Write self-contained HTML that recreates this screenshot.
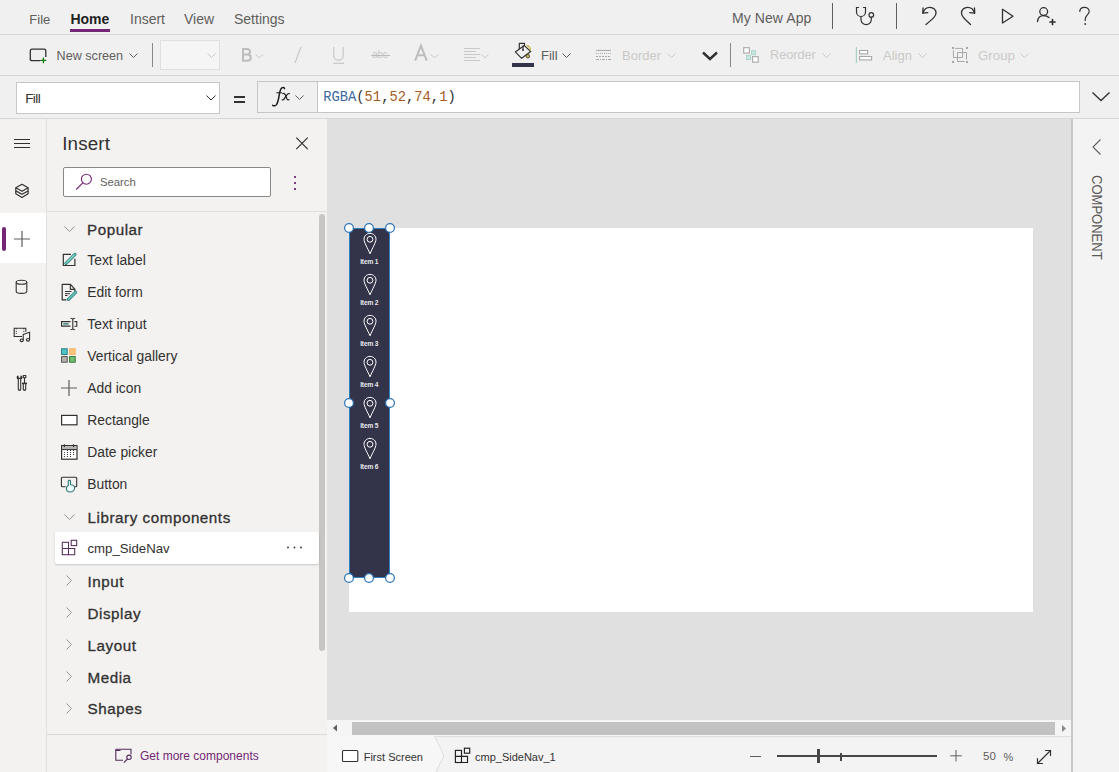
<!DOCTYPE html>
<html><head><meta charset="utf-8">
<style>
*{box-sizing:border-box;margin:0;padding:0}
html,body{width:1119px;height:772px;overflow:hidden;background:#f0f0f0;font-family:"Liberation Sans",sans-serif;color:#323130;position:relative}
.a{position:absolute}
.t{position:absolute;white-space:nowrap;line-height:1}
svg{position:absolute;overflow:visible}
</style></head><body>
<div class="a" style="left:0px;top:0px;width:1119px;height:118px;background:#f0f0f0;"></div>
<div class="a" style="left:0px;top:34px;width:1119px;height:1px;background:#d6d6d6;"></div>
<div class="a" style="left:0px;top:75px;width:1119px;height:1px;background:#d6d6d6;"></div>
<div class="a" style="left:0px;top:118px;width:1119px;height:1px;background:#d6d6d6;"></div>
<div class="a" style="left:0px;top:119px;width:46px;height:653px;background:#f3f2f1;"></div>
<div class="a" style="left:46px;top:119px;width:1px;height:653px;background:#e1dfdd;"></div>
<div class="a" style="left:0px;top:213px;width:46px;height:50px;background:#ffffff;"></div>
<div class="a" style="left:2px;top:227px;width:4px;height:24px;background:#742774;border-radius:2px;"></div>
<div class="a" style="left:47px;top:119px;width:280px;height:653px;background:#f3f2f1;"></div>
<div class="a" style="left:47px;top:211px;width:280px;height:1px;background:#e1dfdd;"></div>
<div class="a" style="left:47px;top:734px;width:280px;height:1px;background:#dcdad8;"></div>
<div class="a" style="left:327px;top:119px;width:744px;height:601px;background:#e0e0e0;"></div>
<div class="a" style="left:349px;top:228px;width:684px;height:384px;background:#ffffff;"></div>
<div class="a" style="left:327px;top:720px;width:744px;height:16px;background:#f5f5f5;"></div>
<div class="a" style="left:352px;top:722px;width:703px;height:13px;background:#c2c2c2;"></div>
<svg style="left:327px;top:720px;" width="744" height="16" viewBox="0 0 744 16" fill="none"><path d="M10 4.5 L6 8 L10 11.5Z" fill="#605e5c"/><path d="M735 5 L739 8.5 L735 12Z" fill="#8a8886"/></svg>
<div class="a" style="left:327px;top:736px;width:744px;height:36px;background:#f3f3f3;"></div>
<div class="a" style="left:327px;top:736px;width:744px;height:1px;background:#dedede;"></div>
<div class="a" style="left:1071px;top:119px;width:2px;height:653px;background:#c8c8c8;"></div>
<div class="a" style="left:1073px;top:119px;width:46px;height:653px;background:#f3f3f3;"></div>
<div class="t" style="left:29.30px;top:12.50px;font-size:13px;color:#605e5c;">File</div>
<div class="t" style="left:70.40px;top:11.65px;font-size:14px;color:#201f1e;font-weight:700;">Home</div>
<div class="a" style="left:70px;top:29px;width:40px;height:3px;background:#742774;"></div>
<div class="t" style="left:130.00px;top:11.65px;font-size:14px;color:#605e5c;">Insert</div>
<div class="t" style="left:184.00px;top:11.65px;font-size:14px;color:#605e5c;">View</div>
<div class="t" style="left:234.00px;top:11.65px;font-size:14px;color:#605e5c;">Settings</div>
<div class="t" style="left:732.00px;top:10.85px;font-size:14px;color:#605e5c;letter-spacing:0.08px;">My New App</div>
<div class="a" style="left:832px;top:3px;width:1px;height:26px;background:#605e5c;"></div>
<div class="a" style="left:896px;top:3px;width:1px;height:26px;background:#605e5c;"></div>
<svg style="left:850px;top:0px;" width="50" height="34" viewBox="0 0 50 34" fill="none"><g stroke="#323130" stroke-width="1.2" fill="none" stroke-linecap="round"><path d="M8.5 7.5 H6.5 V12 A4.5 4.5 0 0 0 15.5 12 V7.5 H13.5"/><path d="M11 16.5 V19.5 A5 5 0 0 0 21.3 19.5 V17.3"/><circle cx="21.3" cy="14.9" r="2.3"/></g></svg>
<svg style="left:915px;top:0px;" width="30" height="34" viewBox="0 0 30 34" fill="none"><g stroke="#323130" stroke-width="1.3" fill="none" stroke-linecap="round" stroke-linejoin="round"><path d="M8 13 C9 9 12 7.3 15 7.3 C18.5 7.3 21 10 21 13 C21 16 19 18 11 24.5"/><path d="M8 8 L7.8 13.2 L12.8 12.6"/></g></svg>
<svg style="left:955px;top:0px;" width="30" height="34" viewBox="0 0 30 34" fill="none"><g stroke="#323130" stroke-width="1.3" fill="none" stroke-linecap="round" stroke-linejoin="round"><path d="M19.5 13 C18.5 9 15.5 7.3 12.5 7.3 C9 7.3 6.5 10 6.5 13 C6.5 16 8.5 18 15.5 24.5"/><path d="M19.5 8 L19.7 13.2 L14.7 12.6"/></g></svg>
<svg style="left:995px;top:0px;" width="30" height="34" viewBox="0 0 30 34" fill="none"><path d="M7.5 9.3 L7.5 23 L18 16.2 Z" stroke="#323130" stroke-width="1.3" fill="none" stroke-linejoin="round"/></svg>
<svg style="left:1030px;top:0px;" width="35" height="34" viewBox="0 0 35 34" fill="none"><g stroke="#323130" stroke-width="1.3" fill="none" stroke-linecap="round"><circle cx="13.7" cy="11.6" r="3.9"/><path d="M7.5 21.6 C8 17.5 10.5 15.7 13.7 15.7 C16 15.7 17.7 16.5 19 17.6"/><path d="M22.5 19.5 V24.5 M20 22 H25" stroke-width="1.7"/></g></svg>
<svg style="left:1070px;top:0px;" width="30" height="34" viewBox="0 0 30 34" fill="none"><g stroke="#323130" stroke-width="1.2" fill="none" stroke-linecap="round"><path d="M9.8 11.5 C9.8 8.8 12 7.3 14.5 7.3 C17 7.3 19.2 9 19.2 11.6 C19.2 14.5 15.2 15.6 15.2 19.3 V20.5"/></g><circle cx="15.2" cy="24" r="0.9" fill="#323130"/></svg>
<svg style="left:25px;top:40px;" width="30" height="30" viewBox="0 0 30 30" fill="none"><path d="M15.5 20.7 H7 Q5.3 20.7 5.3 19 V10.8 Q5.3 9.1 7 9.1 H19.1 Q20.8 9.1 20.8 10.8 V17" stroke="#323130" stroke-width="1.3" fill="none"/><path d="M18.4 17.5 V23.3 M15.5 20.4 H21.3" stroke="#107c10" stroke-width="1.3"/></svg>
<div class="t" style="left:56.60px;top:49.83px;font-size:12.6px;color:#605e5c;">New screen</div>
<svg style="left:129px;top:53px;" width="9" height="5" viewBox="0 0 9 5" fill="none"><path d="M0.5 0.5 L4.5 4.5 L8.5 0.5" stroke="#605e5c" stroke-width="1" fill="none"/></svg>
<div class="a" style="left:152px;top:43px;width:1px;height:24px;background:#8a8886;"></div>
<div class="a" style="left:160px;top:40px;width:60px;height:30px;background:#f5f5f5;border:1px solid #e1dfdd;"></div>
<svg style="left:206.5px;top:52.5px;" width="9" height="5" viewBox="0 0 9 5" fill="none"><path d="M0.5 0.5 L4.5 4.5 L8.5 0.5" stroke="#cbc9c7" stroke-width="1" fill="none"/></svg>
<svg style="left:236px;top:42px;" width="34" height="26" viewBox="0 0 34 26" fill="none"><path d="M7 6.9 H10.6 C12.9 6.9 14.1 8 14.1 9.8 C14.1 11.5 12.8 12.6 10.8 12.6 H7 M7 12.6 H11.2 C13.4 12.6 14.8 13.8 14.8 15.7 C14.8 17.7 13.3 18.8 11.1 18.8 H7 V5.9" stroke="#bdbdbd" stroke-width="2" fill="none"/></svg>
<svg style="left:255.4px;top:53.8px;" width="8.6" height="4.2" viewBox="0 0 8.6 4.2" fill="none"><path d="M0.5 0.5 L4.3 3.7 L8.1 0.5" stroke="#cbc9c7" stroke-width="1" fill="none"/></svg>
<svg style="left:290px;top:44px;" width="15" height="22" viewBox="0 0 15 22" fill="none"><path d="M11 3 L5 19" stroke="#cbc9c7" stroke-width="1.3"/></svg>
<svg style="left:330px;top:44px;" width="18" height="22" viewBox="0 0 18 22" fill="none"><path d="M3.8 3 V11.5 A4.7 4.7 0 0 0 13.2 11.5 V3" stroke="#cbc9c7" stroke-width="1.2" fill="none"/><path d="M3 19.3 H14" stroke="#cbc9c7" stroke-width="1.2"/></svg>
<div class="t" style="left:372.30px;top:49.83px;font-size:10px;color:#cbc9c7;letter-spacing:-0.3px;">abc</div>
<div class="a" style="left:370.5px;top:55px;width:19px;height:1px;background:#bdbdbd;"></div>
<svg style="left:408px;top:42px;" width="34" height="26" viewBox="0 0 34 26" fill="none"><path d="M7.2 18.7 L12.95 3.6 L18.7 18.7 M9.3 13.3 H16.6" stroke="#bdbdbd" stroke-width="2" fill="none"/></svg>
<svg style="left:429.5px;top:53.8px;" width="9" height="4.2" viewBox="0 0 9 4.2" fill="none"><path d="M0.5 0.5 L4.5 3.7 L8.5 0.5" stroke="#cbc9c7" stroke-width="1" fill="none"/></svg>
<svg style="left:460px;top:45px;" width="22" height="20" viewBox="0 0 22 20" fill="none"><path d="M4 3.5 H20" stroke="#cbc9c7" stroke-width="1"/><path d="M4 6.5 H16" stroke="#cbc9c7" stroke-width="1"/><path d="M4 9.5 H20" stroke="#cbc9c7" stroke-width="1"/><path d="M4 12.5 H16" stroke="#cbc9c7" stroke-width="1"/><path d="M4 15.5 H20" stroke="#cbc9c7" stroke-width="1"/></svg>
<svg style="left:481px;top:54px;" width="8" height="4.5" viewBox="0 0 8 4.5" fill="none"><path d="M0.5 0.5 L4.0 4.0 L7.5 0.5" stroke="#cbc9c7" stroke-width="1" fill="none"/></svg>
<svg style="left:505px;top:38px;" width="40" height="32" viewBox="0 0 40 32" fill="none"><g stroke="#323130" stroke-width="1.2" fill="none" stroke-linejoin="round"><path d="M10.3 13.9 L19.3 7.6 L25.7 13.5 L16.6 20.3 Z"/><path d="M14.3 11.2 V5.3 H19.5 V7.8"/><path d="M18 7.5 V11.5"/></g><circle cx="18" cy="12" r="1" fill="#323130"/><path d="M21.5 7.5 C24 7.5 25.5 10 25.3 12.5" stroke="#c8b94a" stroke-width="1.4" fill="none"/><circle cx="22.8" cy="18.2" r="1.8" fill="#c8b94a" stroke="#323130" stroke-width="0.8"/></svg>
<div class="a" style="left:512px;top:63px;width:22px;height:4px;background:#33344a;"></div>
<div class="t" style="left:541.00px;top:49.00px;font-size:13px;color:#605e5c;">Fill</div>
<svg style="left:562px;top:53px;" width="9" height="5" viewBox="0 0 9 5" fill="none"><path d="M0.5 0.5 L4.5 4.5 L8.5 0.5" stroke="#605e5c" stroke-width="1" fill="none"/></svg>
<svg style="left:590px;top:42px;" width="30" height="26" viewBox="0 0 30 26" fill="none"><path d="M6 8.4 H21" stroke="#a8a8a8" stroke-width="1"/><rect x="5.9" y="10.9" width="1" height="1" fill="#a8a8a8"/><rect x="7.9" y="10.9" width="1" height="1" fill="#a8a8a8"/><rect x="9.9" y="10.9" width="1" height="1" fill="#a8a8a8"/><rect x="11.9" y="10.9" width="1" height="1" fill="#a8a8a8"/><rect x="13.9" y="10.9" width="1" height="1" fill="#a8a8a8"/><rect x="15.9" y="10.9" width="1" height="1" fill="#a8a8a8"/><rect x="17.9" y="10.9" width="1" height="1" fill="#a8a8a8"/><rect x="19.9" y="10.9" width="1" height="1" fill="#a8a8a8"/><rect x="6" y="14" width="2" height="1" fill="#a8a8a8"/><rect x="9" y="14" width="2" height="1" fill="#a8a8a8"/><rect x="12" y="14" width="2" height="1" fill="#a8a8a8"/><rect x="15" y="14" width="2" height="1" fill="#a8a8a8"/><rect x="18" y="14" width="2" height="1" fill="#a8a8a8"/><path d="M6 17.5 H9 M10 17.5 H11 M12 17.5 H15 M16 17.5 H17 M18 17.5 H21" stroke="#a8a8a8" stroke-width="1"/></svg>
<div class="t" style="left:622.00px;top:49.00px;font-size:13px;color:#cbc9c7;">Border</div>
<svg style="left:667px;top:53px;" width="9" height="5" viewBox="0 0 9 5" fill="none"><path d="M0.5 0.5 L4.5 4.5 L8.5 0.5" stroke="#cbc9c7" stroke-width="1" fill="none"/></svg>
<svg style="left:700px;top:48px;" width="20" height="16" viewBox="0 0 20 16" fill="none"><path d="M3 4.5 L10 11 L17 4.5" stroke="#323130" stroke-width="2.4" fill="none"/></svg>
<div class="a" style="left:730px;top:43px;width:1px;height:24px;background:#8a8886;"></div>
<svg style="left:738px;top:42px;" width="32" height="26" viewBox="0 0 32 26" fill="none"><rect x="5.7" y="5.7" width="5.6" height="5.4" stroke="#a8a8a8" stroke-width="1.1" fill="#fff"/><rect x="13.6" y="8.7" width="4" height="4" stroke="#a8d4cc" stroke-width="1" fill="#c8e6e0"/><rect x="8.5" y="13.6" width="4" height="4" stroke="#a8d4cc" stroke-width="1" fill="#c8e6e0"/><rect x="14.6" y="14.6" width="5.6" height="5.6" stroke="#a8a8a8" stroke-width="1.1" fill="#fff"/></svg>
<div class="t" style="left:770.00px;top:49.25px;font-size:12.7px;color:#cbc9c7;">Reorder</div>
<svg style="left:822px;top:53px;" width="9" height="5" viewBox="0 0 9 5" fill="none"><path d="M0.5 0.5 L4.5 4.5 L8.5 0.5" stroke="#cbc9c7" stroke-width="1" fill="none"/></svg>
<svg style="left:850px;top:42px;" width="26" height="26" viewBox="0 0 26 26" fill="none"><path d="M6.4 5 V21" stroke="#a8cfc8" stroke-width="1.2"/><rect x="9.6" y="8.5" width="8" height="3.4" stroke="#a8a8a8" stroke-width="1.1" fill="#fff"/><rect x="9.6" y="14.5" width="12" height="3.4" stroke="#a8a8a8" stroke-width="1.1" fill="#fff"/></svg>
<div class="t" style="left:883.00px;top:49.00px;font-size:13px;color:#cbc9c7;">Align</div>
<svg style="left:918px;top:53px;" width="9" height="5" viewBox="0 0 9 5" fill="none"><path d="M0.5 0.5 L4.5 4.5 L8.5 0.5" stroke="#cbc9c7" stroke-width="1" fill="none"/></svg>
<svg style="left:946px;top:42px;" width="28" height="26" viewBox="0 0 28 26" fill="none"><g fill="#a8a8a8"><rect x="6" y="5" width="2" height="2"/><rect x="20" y="5" width="2" height="2"/><rect x="6" y="19" width="2" height="2"/><rect x="20" y="19" width="2" height="2"/></g><g stroke="#a8a8a8" stroke-width="1" fill="none"><path d="M9.2 6.4 H16.6 V15.5 H7.4 V8.2"/><path d="M11.5 10.5 H20.5 V17.5 M18.7 19.5 H11.5 V10.5"/></g></svg>
<div class="t" style="left:978.00px;top:48.74px;font-size:13.3px;color:#cbc9c7;">Group</div>
<svg style="left:1020px;top:53px;" width="9" height="5" viewBox="0 0 9 5" fill="none"><path d="M0.5 0.5 L4.5 4.5 L8.5 0.5" stroke="#cbc9c7" stroke-width="1" fill="none"/></svg>
<div class="a" style="left:16px;top:82px;width:204px;height:32px;background:#ffffff;border:1px solid #c8c6c4;"></div>
<div class="t" style="left:25.20px;top:91.57px;font-size:13.5px;color:#323130;letter-spacing:-0.6px;">Fill</div>
<svg style="left:206px;top:95px;" width="10" height="5.5" viewBox="0 0 10 5.5" fill="none"><path d="M0.5 0.5 L5.0 5.0 L9.5 0.5" stroke="#323130" stroke-width="1" fill="none"/></svg>
<div class="a" style="left:234px;top:96px;width:11px;height:1.6px;background:#323130;"></div>
<div class="a" style="left:234px;top:101px;width:11px;height:1.6px;background:#323130;"></div>
<div class="a" style="left:257px;top:81px;width:61px;height:32px;background:#f0f0f0;border:1px solid #c8c6c4;"></div>
<svg style="left:257px;top:80px;" width="60" height="34" viewBox="0 0 60 34" fill="none"><g stroke="#201f1e" fill="none" stroke-linecap="round"><path d="M27.6 8.6 C27.3 7.4 25.8 7.2 24.8 7.9 C23.4 8.9 22.9 11 22.3 14.5 C21.6 19 21 22.5 19.5 24.6 C18.5 26 16.8 26.3 15.6 25.2" stroke-width="1.5"/><path d="M19.8 12.8 H24.5" stroke-width="1.1"/><path d="M25.8 13.6 C27 13 28 13.8 28.6 15.5 L30 19 C30.5 20 31.2 20.3 32 19.6" stroke-width="1.2"/><path d="M32.3 13.6 C31.5 13.2 30.6 13.8 29.5 15.3 L27.3 18.6 C26.6 19.8 25.8 20.3 25.2 19.8" stroke-width="1.2"/></g></svg>
<svg style="left:294.5px;top:95px;" width="9" height="5" viewBox="0 0 9 5" fill="none"><path d="M0.5 0.5 L4.5 4.5 L8.5 0.5" stroke="#605e5c" stroke-width="1" fill="none"/></svg>
<div class="a" style="left:317px;top:81px;width:763px;height:32px;background:#ffffff;border:1px solid #c8c6c4;"></div>
<div class="t" style="left:323.20px;top:91.12px;font-size:13.8px;color:#323130;font-family:'Liberation Mono',monospace;"><span style="color:#3b6aa0">RGBA</span>(<span style="color:#a55a1e">51</span>,<span style="color:#a55a1e">52</span>,<span style="color:#a55a1e">74</span>,<span style="color:#a55a1e">1</span>)</div>
<svg style="left:1092px;top:92px;" width="18" height="9" viewBox="0 0 18 9" fill="none"><path d="M0.5 0.5 L9.0 8.5 L17.5 0.5" stroke="#323130" stroke-width="1.3" fill="none"/></svg>
<div class="a" style="left:14px;top:138.5px;width:16px;height:1.2px;background:#323130;"></div>
<div class="a" style="left:14px;top:142.8px;width:16px;height:1.2px;background:#323130;"></div>
<div class="a" style="left:14px;top:147.1px;width:16px;height:1.2px;background:#323130;"></div>
<svg style="left:0px;top:170px;" width="46" height="30" viewBox="0 0 46 30" fill="none"><g stroke="#323130" stroke-width="1.2" fill="none" stroke-linejoin="round"><path d="M22 14.3 L28.1 17.8 L22 21.2 L15.8 17.8 Z"/><path d="M15.8 17.8 V20.9 L22 24.3 L28.1 20.9 V17.8"/><path d="M15.8 20.9 V23.8 L22 27.4 L28.1 23.8 V20.9"/></g></svg>
<svg style="left:0px;top:223px;" width="46" height="32" viewBox="0 0 46 32" fill="none"><path d="M22 8 V24 M14 16 H30" stroke="#605e5c" stroke-width="1.2"/></svg>
<svg style="left:0px;top:270px;" width="46" height="30" viewBox="0 0 46 30" fill="none"><g stroke="#323130" stroke-width="1.1" fill="none"><ellipse cx="21.5" cy="12.3" rx="5.3" ry="2"/><path d="M16.2 12.3 V21.3 C16.2 22.5 18.5 23.4 21.5 23.4 C24.5 23.4 26.8 22.5 26.8 21.3 V12.3"/></g></svg>
<svg style="left:0px;top:320px;" width="46" height="30" viewBox="0 0 46 30" fill="none"><g stroke="#323130" stroke-width="1.1" fill="none"><path d="M22 16.5 H14.2 V8.3 H25.8 V11.7"/><path d="M23.2 20 V14.6 C25.5 13.5 27.5 12.7 29.6 12.2 V19.6"/></g><g fill="#323130"><rect x="15.8" y="10.9" width="1" height="1"/><rect x="15.8" y="12.9" width="1" height="1"/><rect x="15.8" y="8.3" width="1" height="1"/><rect x="23.3" y="8.3" width="1" height="1"/><rect x="23.3" y="10.9" width="1" height="1"/></g><ellipse cx="21.7" cy="20.3" rx="1.6" ry="1.3" stroke="#323130" stroke-width="1.1" fill="none"/><ellipse cx="28" cy="19.8" rx="1.6" ry="1.3" stroke="#323130" stroke-width="1.1" fill="none"/></svg>
<svg style="left:0px;top:368px;" width="46" height="30" viewBox="0 0 46 30" fill="none"><g stroke="#323130" stroke-width="1.1" fill="none" stroke-linejoin="round"><path d="M18 8 C16.8 8.6 16.8 10.4 18.3 11.2 V21.6 C18.3 22.6 20.7 22.6 20.7 21.6 V11.2 C22.2 10.4 22.2 8.6 21 8 V9.8 L19.5 10.6 L18 9.8 Z"/><rect x="23.3" y="7.5" width="2.5" height="2.3"/><path d="M24.5 9.8 V15"/><path d="M23.3 15.8 V21.6 C23.3 22.6 25.7 22.6 25.7 21.6 V15.8"/></g><path d="M22 15.4 H27" stroke="#323130" stroke-width="1.5"/></svg>
<div class="t" style="left:62.20px;top:134.89px;font-size:18.8px;color:#323130;letter-spacing:0.15px;">Insert</div>
<svg style="left:290px;top:132px;" width="24" height="24" viewBox="0 0 24 24" fill="none"><path d="M6.3 5.7 L17.7 17.1 M17.7 5.7 L6.3 17.1" stroke="#323130" stroke-width="1.2"/></svg>
<div class="a" style="left:63px;top:167px;width:208px;height:30px;background:#ffffff;border:1px solid #8a8886;border-radius:2px;"></div>
<svg style="left:60px;top:160px;" width="40" height="40" viewBox="0 0 40 40" fill="none"><circle cx="26.4" cy="19.2" r="5" stroke="#742774" stroke-width="1.1" fill="none"/><path d="M22.8 22.8 L16.2 29.5" stroke="#742774" stroke-width="1.1"/></svg>
<div class="t" style="left:99.90px;top:177.23px;font-size:11.3px;color:#605e5c;">Search</div>
<svg style="left:285px;top:170px;" width="20" height="24" viewBox="0 0 20 24" fill="none"><g fill="#7a3d7e"><rect x="9" y="6" width="2" height="2"/><rect x="9" y="12" width="2" height="2"/><rect x="9" y="18" width="2" height="2"/></g></svg>
<div class="a" style="left:319px;top:214px;width:6px;height:437px;background:#c8c6c4;border-radius:3px;"></div>
<svg style="left:63.5px;top:226px;" width="11" height="6" viewBox="0 0 11 6" fill="none"><path d="M0.5 0.5 L5.5 5.5 L10.5 0.5" stroke="#979593" stroke-width="1" fill="none"/></svg>
<div class="t" style="left:87.00px;top:222.13px;font-size:15.2px;color:#323130;-webkit-text-stroke:0.3px #323130;letter-spacing:0.55px;">Popular</div>
<div class="t" style="left:87.30px;top:253.68px;font-size:13.85px;color:#323130;">Text label</div>
<div class="t" style="left:87.30px;top:285.68px;font-size:13.85px;color:#323130;">Edit form</div>
<div class="t" style="left:87.30px;top:317.68px;font-size:13.85px;color:#323130;">Text input</div>
<div class="t" style="left:87.30px;top:349.68px;font-size:13.85px;color:#323130;">Vertical gallery</div>
<div class="t" style="left:87.30px;top:381.68px;font-size:13.85px;color:#323130;">Add icon</div>
<div class="t" style="left:87.30px;top:413.68px;font-size:13.85px;color:#323130;">Rectangle</div>
<div class="t" style="left:87.30px;top:445.68px;font-size:13.85px;color:#323130;">Date picker</div>
<div class="t" style="left:87.30px;top:477.68px;font-size:13.85px;color:#323130;">Button</div>
<svg style="left:56px;top:248px;" width="28" height="24" viewBox="0 0 28 24" fill="none"><path d="M15 6.4 H7.3 V17.5 H18.9 V10.8" stroke="#323130" stroke-width="1.2" fill="none"/><path d="M10 15.3 L18.9 6.4" stroke="#2d7b76" stroke-width="3.2" stroke-linecap="round"/><path d="M10 15.3 L18.9 6.4" stroke="#5dbcb2" stroke-width="2" stroke-linecap="round"/><path d="M11 14.3 L18 7.3" stroke="#d8f0ec" stroke-width="0.6"/></svg>
<svg style="left:56px;top:280px;" width="28" height="24" viewBox="0 0 28 24" fill="none"><path d="M10.5 19.9 H6.2 V4.3 H14.5 L18.9 9.3 V11.5" stroke="#323130" stroke-width="1.2" fill="none" stroke-linejoin="round"/><path d="M14.3 4.3 V9.4 H18.9" stroke="#323130" stroke-width="1.1" fill="none"/><path d="M9 11.5 H15.5 M9 13.7 H14 M9 15.5 H11.5" stroke="#323130" stroke-width="1"/><path d="M12.5 19.3 L19.5 12.3" stroke="#2d7b76" stroke-width="3.2" stroke-linecap="round"/><path d="M12.5 19.3 L19.5 12.3" stroke="#5dbcb2" stroke-width="2" stroke-linecap="round"/></svg>
<svg style="left:56px;top:312px;" width="28" height="24" viewBox="0 0 28 24" fill="none"><path d="M14.5 9.6 H5.6 V14.2 H14.5" stroke="#323130" stroke-width="1.2" fill="none"/><rect x="7.3" y="11.2" width="5.3" height="1.4" fill="#2d7b76"/><path d="M16.8 6.5 V17.5 M14.5 6.3 C15.8 6.3 16.8 6.8 16.8 7.5 C16.8 6.8 17.8 6.3 19 6.3 M14.5 17.7 C15.8 17.7 16.8 17.2 16.8 16.5 C16.8 17.2 17.8 17.7 19 17.7" stroke="#323130" stroke-width="1.1" fill="none"/><path d="M18.4 9.6 H20.8 V14.2 H18.4" stroke="#323130" stroke-width="1.1" fill="none"/></svg>
<svg style="left:56px;top:344px;" width="28" height="24" viewBox="0 0 28 24" fill="none"><rect x="5.6" y="4.8" width="5.6" height="5.6" fill="#4ec6c8" stroke="#1f6d6e" stroke-width="0.9"/><rect x="13.6" y="4.8" width="5.6" height="5.6" fill="#f9c37b" stroke="#f4b35e" stroke-width="0.9"/><rect x="5.6" y="12.6" width="5.6" height="5.6" fill="#b5b2af" stroke="#4a4846" stroke-width="0.9"/><rect x="13.6" y="12.6" width="5.6" height="5.6" fill="#6fc06f" stroke="#2d6e2d" stroke-width="0.9"/></svg>
<svg style="left:56px;top:376px;" width="28" height="24" viewBox="0 0 28 24" fill="none"><path d="M13 4 V20 M5 12 H21" stroke="#605e5c" stroke-width="1.2"/></svg>
<svg style="left:56px;top:408px;" width="28" height="24" viewBox="0 0 28 24" fill="none"><rect x="5.6" y="7.4" width="15.4" height="9.4" fill="#fff" stroke="#323130" stroke-width="1.2"/></svg>
<svg style="left:56px;top:408px;" width="28" height="56" viewBox="0 0 28 56" fill="none"><rect x="5.6" y="37.6" width="15.4" height="13.6" fill="#fff" stroke="#323130" stroke-width="1.2"/><rect x="6.2" y="38.2" width="14.2" height="3.4" fill="#b5b2af"/><path d="M5.6 41.6 H21" stroke="#323130" stroke-width="1"/><path d="M8.4 36.3 V39 M17.5 36.3 V39" stroke="#323130" stroke-width="1.1"/><rect x="10.95" y="42.00" width="1" height="1" fill="#323130"/><rect x="14.00" y="42.00" width="1" height="1" fill="#323130"/><rect x="17.05" y="42.00" width="1" height="1" fill="#323130"/><rect x="7.90" y="44.00" width="1" height="1" fill="#323130"/><rect x="10.95" y="44.00" width="1" height="1" fill="#323130"/><rect x="14.00" y="44.00" width="1" height="1" fill="#323130"/><rect x="17.05" y="44.00" width="1" height="1" fill="#323130"/><rect x="7.90" y="46.00" width="1" height="1" fill="#323130"/><rect x="10.95" y="46.00" width="1" height="1" fill="#323130"/><rect x="14.00" y="46.00" width="1" height="1" fill="#323130"/><rect x="17.05" y="46.00" width="1" height="1" fill="#323130"/><rect x="7.90" y="48.00" width="1" height="1" fill="#323130"/><rect x="10.95" y="48.00" width="1" height="1" fill="#323130"/><rect x="14.00" y="48.00" width="1" height="1" fill="#323130"/></svg>
<svg style="left:56px;top:470px;" width="28" height="28" viewBox="0 0 28 28" fill="none"><path d="M9.6 16.7 H6.4 Q5.4 16.7 5.4 15.7 V8.3 Q5.4 7.3 6.4 7.3 H19.7 Q20.7 7.3 20.7 8.3 V15.7 Q20.7 16.7 19.7 16.7 H18.8" stroke="#323130" stroke-width="1.1" fill="none"/><path d="M12.3 15.5 V11.2 C12.3 10 14.5 10 14.5 11.2 V14.8 C16.5 14.8 18.6 15.5 18.6 17.8 C18.6 20.3 16.6 22 14.4 22 C12 22 10.4 20.3 10.4 18.2 C10.4 17 11.2 16 12.3 15.5 Z" stroke="#2d7b76" stroke-width="1.1" fill="#eefafa"/></svg>
<svg style="left:63.5px;top:514px;" width="11" height="6" viewBox="0 0 11 6" fill="none"><path d="M0.5 0.5 L5.5 5.5 L10.5 0.5" stroke="#979593" stroke-width="1" fill="none"/></svg>
<div class="t" style="left:87.50px;top:510.13px;font-size:15.2px;color:#323130;-webkit-text-stroke:0.3px #323130;letter-spacing:0.55px;">Library components</div>
<div class="a" style="left:55px;top:532px;width:264px;height:32px;background:#ffffff;box-shadow:0 1px 2px rgba(0,0,0,0.18);border-radius:2px;"></div>
<svg style="left:56px;top:534px;" width="28" height="28" viewBox="0 0 28 28" fill="none"><g stroke="#552a5e" stroke-width="1.05" fill="none"><rect x="6.3" y="8.3" width="6.2" height="12.4"/><path d="M6.3 14.5 H18.7 V20.7 H12.5"/><rect x="15.2" y="6.3" width="5.5" height="5.3"/></g></svg>
<div class="t" style="left:87.50px;top:541.83px;font-size:13.2px;color:#323130;">cmp_SideNav</div>
<svg style="left:282px;top:540px;" width="24" height="16" viewBox="0 0 24 16" fill="none"><g fill="#323130"><circle cx="6" cy="7.5" r="0.9"/><circle cx="12.5" cy="7.5" r="0.9"/><circle cx="19" cy="7.5" r="0.9"/></g></svg>
<svg style="left:66px;top:575.0px;" width="6" height="11" viewBox="0 0 6 11" fill="none"><path d="M0.5 0.5 L5.5 5.5 L0.5 10.5" stroke="#979593" stroke-width="1" fill="none"/></svg>
<div class="t" style="left:87.50px;top:573.73px;font-size:15.2px;color:#323130;-webkit-text-stroke:0.3px #323130;letter-spacing:0.55px;">Input</div>
<svg style="left:66px;top:607.0px;" width="6" height="11" viewBox="0 0 6 11" fill="none"><path d="M0.5 0.5 L5.5 5.5 L0.5 10.5" stroke="#979593" stroke-width="1" fill="none"/></svg>
<div class="t" style="left:87.50px;top:605.73px;font-size:15.2px;color:#323130;-webkit-text-stroke:0.3px #323130;letter-spacing:0.55px;">Display</div>
<svg style="left:66px;top:638.9px;" width="6" height="11" viewBox="0 0 6 11" fill="none"><path d="M0.5 0.5 L5.5 5.5 L0.5 10.5" stroke="#979593" stroke-width="1" fill="none"/></svg>
<div class="t" style="left:87.50px;top:637.63px;font-size:15.2px;color:#323130;-webkit-text-stroke:0.3px #323130;letter-spacing:0.55px;">Layout</div>
<svg style="left:66px;top:670.8px;" width="6" height="11" viewBox="0 0 6 11" fill="none"><path d="M0.5 0.5 L5.5 5.5 L0.5 10.5" stroke="#979593" stroke-width="1" fill="none"/></svg>
<div class="t" style="left:87.50px;top:669.53px;font-size:15.2px;color:#323130;-webkit-text-stroke:0.3px #323130;letter-spacing:0.55px;">Media</div>
<svg style="left:66px;top:702.6999999999999px;" width="6" height="11" viewBox="0 0 6 11" fill="none"><path d="M0.5 0.5 L5.5 5.5 L0.5 10.5" stroke="#979593" stroke-width="1" fill="none"/></svg>
<div class="t" style="left:87.50px;top:701.43px;font-size:15.2px;color:#323130;-webkit-text-stroke:0.3px #323130;letter-spacing:0.55px;">Shapes</div>
<svg style="left:108px;top:740px;" width="32" height="30" viewBox="0 0 32 30" fill="none"><g stroke="#552a5e" stroke-width="1.1" fill="none"><path d="M7.8 9.2 H12.5 M7.8 10.5 H12.5 M12.5 9.3 H23 V14.5"/><path d="M7.8 9.2 V20.2 H15"/><circle cx="21" cy="17.3" r="2.2"/><path d="M19.5 19 L15.8 22.6"/></g></svg>
<div class="t" style="left:140.00px;top:750.24px;font-size:12px;color:#742774;">Get more components</div>
<div class="a" style="left:349px;top:228px;width:41px;height:350px;background:#33344a;border:1px solid #2f7fc1;"></div>
<svg style="left:369.5px;top:246px;" width="1" height="1" viewBox="0 0 1 1" fill="none"><path d="M0 -12.6 C-3.4 -12.6 -6 -10.1 -6 -6.8 C-6 -3.6 -2.2 2.4 0 7.8 C2.2 2.4 6 -3.6 6 -6.8 C6 -10.1 3.4 -12.6 0 -12.6 Z" stroke="#fff" stroke-width="1" fill="none" stroke-linejoin="round"/><circle cx="0" cy="-6.7" r="2.9" stroke="#fff" stroke-width="1" fill="none"/></svg>
<div class="t" style="left:360.20px;top:258.61px;font-size:6.6px;color:#e8e8ec;font-weight:700;letter-spacing:-0.15px;">Item 1</div>
<svg style="left:369.5px;top:287px;" width="1" height="1" viewBox="0 0 1 1" fill="none"><path d="M0 -12.6 C-3.4 -12.6 -6 -10.1 -6 -6.8 C-6 -3.6 -2.2 2.4 0 7.8 C2.2 2.4 6 -3.6 6 -6.8 C6 -10.1 3.4 -12.6 0 -12.6 Z" stroke="#fff" stroke-width="1" fill="none" stroke-linejoin="round"/><circle cx="0" cy="-6.7" r="2.9" stroke="#fff" stroke-width="1" fill="none"/></svg>
<div class="t" style="left:360.20px;top:299.61px;font-size:6.6px;color:#e8e8ec;font-weight:700;letter-spacing:-0.15px;">Item 2</div>
<svg style="left:369.5px;top:328px;" width="1" height="1" viewBox="0 0 1 1" fill="none"><path d="M0 -12.6 C-3.4 -12.6 -6 -10.1 -6 -6.8 C-6 -3.6 -2.2 2.4 0 7.8 C2.2 2.4 6 -3.6 6 -6.8 C6 -10.1 3.4 -12.6 0 -12.6 Z" stroke="#fff" stroke-width="1" fill="none" stroke-linejoin="round"/><circle cx="0" cy="-6.7" r="2.9" stroke="#fff" stroke-width="1" fill="none"/></svg>
<div class="t" style="left:360.20px;top:340.61px;font-size:6.6px;color:#e8e8ec;font-weight:700;letter-spacing:-0.15px;">Item 3</div>
<svg style="left:369.5px;top:369px;" width="1" height="1" viewBox="0 0 1 1" fill="none"><path d="M0 -12.6 C-3.4 -12.6 -6 -10.1 -6 -6.8 C-6 -3.6 -2.2 2.4 0 7.8 C2.2 2.4 6 -3.6 6 -6.8 C6 -10.1 3.4 -12.6 0 -12.6 Z" stroke="#fff" stroke-width="1" fill="none" stroke-linejoin="round"/><circle cx="0" cy="-6.7" r="2.9" stroke="#fff" stroke-width="1" fill="none"/></svg>
<div class="t" style="left:360.20px;top:381.61px;font-size:6.6px;color:#e8e8ec;font-weight:700;letter-spacing:-0.15px;">Item 4</div>
<svg style="left:369.5px;top:410px;" width="1" height="1" viewBox="0 0 1 1" fill="none"><path d="M0 -12.6 C-3.4 -12.6 -6 -10.1 -6 -6.8 C-6 -3.6 -2.2 2.4 0 7.8 C2.2 2.4 6 -3.6 6 -6.8 C6 -10.1 3.4 -12.6 0 -12.6 Z" stroke="#fff" stroke-width="1" fill="none" stroke-linejoin="round"/><circle cx="0" cy="-6.7" r="2.9" stroke="#fff" stroke-width="1" fill="none"/></svg>
<div class="t" style="left:360.20px;top:422.61px;font-size:6.6px;color:#e8e8ec;font-weight:700;letter-spacing:-0.15px;">Item 5</div>
<svg style="left:369.5px;top:451px;" width="1" height="1" viewBox="0 0 1 1" fill="none"><path d="M0 -12.6 C-3.4 -12.6 -6 -10.1 -6 -6.8 C-6 -3.6 -2.2 2.4 0 7.8 C2.2 2.4 6 -3.6 6 -6.8 C6 -10.1 3.4 -12.6 0 -12.6 Z" stroke="#fff" stroke-width="1" fill="none" stroke-linejoin="round"/><circle cx="0" cy="-6.7" r="2.9" stroke="#fff" stroke-width="1" fill="none"/></svg>
<div class="t" style="left:360.20px;top:463.61px;font-size:6.6px;color:#e8e8ec;font-weight:700;letter-spacing:-0.15px;">Item 6</div>
<svg style="left:349.1px;top:228px;" width="1" height="1" viewBox="0 0 1 1" fill="none"><circle cx="0" cy="0" r="4.4" fill="#fff" stroke="#2a73b8" stroke-width="1.2"/></svg>
<svg style="left:349.1px;top:403px;" width="1" height="1" viewBox="0 0 1 1" fill="none"><circle cx="0" cy="0" r="4.4" fill="#fff" stroke="#2a73b8" stroke-width="1.2"/></svg>
<svg style="left:349.1px;top:578px;" width="1" height="1" viewBox="0 0 1 1" fill="none"><circle cx="0" cy="0" r="4.4" fill="#fff" stroke="#2a73b8" stroke-width="1.2"/></svg>
<svg style="left:369.3px;top:228px;" width="1" height="1" viewBox="0 0 1 1" fill="none"><circle cx="0" cy="0" r="4.4" fill="#fff" stroke="#2a73b8" stroke-width="1.2"/></svg>
<svg style="left:369.3px;top:578px;" width="1" height="1" viewBox="0 0 1 1" fill="none"><circle cx="0" cy="0" r="4.4" fill="#fff" stroke="#2a73b8" stroke-width="1.2"/></svg>
<svg style="left:389.5px;top:228px;" width="1" height="1" viewBox="0 0 1 1" fill="none"><circle cx="0" cy="0" r="4.4" fill="#fff" stroke="#2a73b8" stroke-width="1.2"/></svg>
<svg style="left:389.5px;top:403px;" width="1" height="1" viewBox="0 0 1 1" fill="none"><circle cx="0" cy="0" r="4.4" fill="#fff" stroke="#2a73b8" stroke-width="1.2"/></svg>
<svg style="left:389.5px;top:578px;" width="1" height="1" viewBox="0 0 1 1" fill="none"><circle cx="0" cy="0" r="4.4" fill="#fff" stroke="#2a73b8" stroke-width="1.2"/></svg>
<svg style="left:327px;top:736px;" width="130" height="36" viewBox="0 0 130 36" fill="none"><path d="M0 0 H107.5 L117 19.7 L109 36 H0 Z" fill="#f7f7f7"/><path d="M107.5 0 L117 19.7 L109 36" stroke="#dedede" stroke-width="1" fill="none"/></svg>
<svg style="left:336px;top:744px;" width="26" height="22" viewBox="0 0 26 22" fill="none"><rect x="6.5" y="6.5" width="15.3" height="11" rx="1" stroke="#323130" stroke-width="1.1" fill="#fff"/></svg>
<div class="t" style="left:363.70px;top:751.69px;font-size:11px;color:#323130;">First Screen</div>
<svg style="left:450px;top:742px;" width="26" height="24" viewBox="0 0 26 24" fill="none"><g stroke="#201f1e" stroke-width="1.15" fill="none"><rect x="5.4" y="8.4" width="6.1" height="12.1"/><path d="M5.4 14.4 H17.5 V20.5 H11.5"/><rect x="14.4" y="6.2" width="5.3" height="5"/></g></svg>
<div class="t" style="left:475.00px;top:751.69px;font-size:11px;color:#323130;">cmp_SideNav_1</div>
<div class="a" style="left:750px;top:756px;width:11px;height:1px;background:#605e5c;"></div>
<div class="a" style="left:777px;top:755px;width:160px;height:2px;background:#484644;"></div>
<div class="a" style="left:817px;top:749px;width:3px;height:14px;background:#484644;"></div>
<div class="a" style="left:840px;top:752.5px;width:1.6px;height:8px;background:#484644;"></div>
<svg style="left:945px;top:745px;" width="22" height="22" viewBox="0 0 22 22" fill="none"><path d="M11 5 V16.5 M5.3 10.8 H16.7" stroke="#605e5c" stroke-width="1"/></svg>
<div class="t" style="left:983.00px;top:751.27px;font-size:11.5px;color:#605e5c;">50</div>
<div class="t" style="left:1003.50px;top:751.69px;font-size:11px;color:#605e5c;letter-spacing:-0.5px;">%</div>
<svg style="left:1030px;top:744px;" width="28" height="24" viewBox="0 0 28 24" fill="none"><g stroke="#323130" stroke-width="1.2" fill="none" stroke-linecap="round"><path d="M7.5 19.5 L20.5 6.5"/><path d="M7.5 14.5 V19.5 H12.5"/><path d="M15.5 6.5 H20.5 V11.5"/></g></svg>
<svg style="left:1085px;top:135px;" width="20" height="24" viewBox="0 0 20 24" fill="none"><path d="M15.5 4.5 L8 12 L15.5 19.5" stroke="#605e5c" stroke-width="1.1" fill="none"/></svg>
<div class="t" style="left:0.00px;top:-12.19px;font-size:14.4px;color:#5a5856;left:1091px;top:175.4px;transform-origin:0 0;transform:translate(12.6px,0) rotate(90deg) scaleX(0.905);">COMPONENT</div>
</body></html>
